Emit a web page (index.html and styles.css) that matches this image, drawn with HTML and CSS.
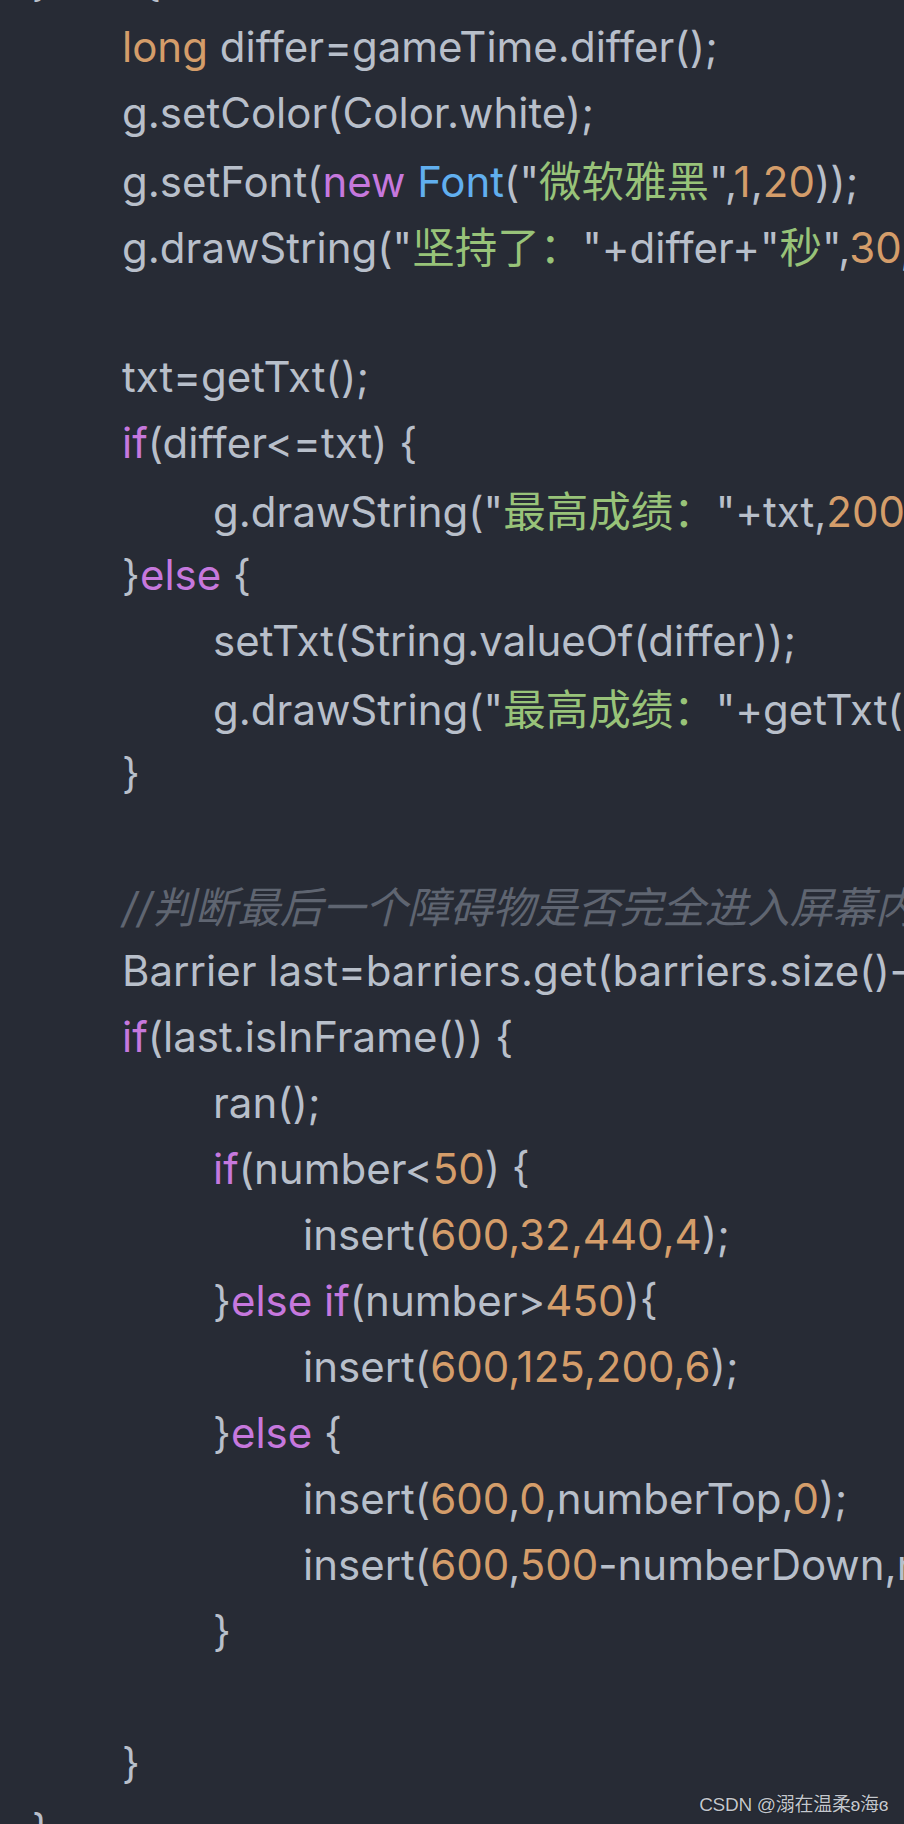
FILE: index.html
```html
<!DOCTYPE html>
<html lang="zh-CN">
<head>
<meta charset="utf-8">
<title>code</title>
<link rel="stylesheet" href="styles.css">
</head>
<body>
<div class="screen">
  <div class="code">
    <div class="ln l0">}<span class="kw">else</span> {</div>
    <div class="ln l1"><span class="num">long</span> differ=gameTime.differ();</div>
    <div class="ln l1">g.setColor(Color.white);</div>
    <div class="ln l1">g.setFont(<span class="kw">new</span> <span class="ty">Font</span>("<span class="str cjk">微软雅黑</span>",<span class="num">1</span>,<span class="num">20</span>));</div>
    <div class="ln l1">g.drawString("<span class="str cjk">坚持了：</span>"+differ+"<span class="str cjk">秒</span>",<span class="num">30</span>,<span class="num">50</span>);</div>
    <div class="ln l1"></div>
    <div class="ln l1">txt=getTxt();</div>
    <div class="ln l1"><span class="kw">if</span>(differ&lt;=txt) {</div>
    <div class="ln l2">g.drawString("<span class="str cjk">最高成绩：</span>"+txt,<span class="num">200</span>,<span class="num">50</span>);</div>
    <div class="ln l1">}<span class="kw">else</span> {</div>
    <div class="ln l2">setTxt(String.valueOf(differ));</div>
    <div class="ln l2">g.drawString("<span class="str cjk">最高成绩：</span>"+getTxt(),<span class="num">200</span>,<span class="num">50</span>);</div>
    <div class="ln l1">}</div>
    <div class="ln l1"></div>
    <div class="ln l1"><span class="cm">//<span class="cjk">判断最后一个障碍物是否完全进入屏幕内</span></span></div>
    <div class="ln l1">Barrier last=barriers.get(barriers.size()-<span class="num">1</span>);</div>
    <div class="ln l1"><span class="kw">if</span>(last.isInFrame()) {</div>
    <div class="ln l2">ran();</div>
    <div class="ln l2"><span class="kw">if</span>(number&lt;<span class="num">50</span>) {</div>
    <div class="ln l3">insert(<span class="num">600,32,440,4</span>);</div>
    <div class="ln l2">}<span class="kw">else if</span>(number&gt;<span class="num">450</span>){</div>
    <div class="ln l3">insert(<span class="num">600,125,200,6</span>);</div>
    <div class="ln l2">}<span class="kw">else</span> {</div>
    <div class="ln l3">insert(<span class="num">600</span>,<span class="num">0</span>,numberTop,<span class="num">0</span>);</div>
    <div class="ln l3">insert(<span class="num">600</span>,<span class="num">500</span>-numberDown,numberDown,<span class="num">2</span>);</div>
    <div class="ln l2">}</div>
    <div class="ln l1"></div>
    <div class="ln l1">}</div>
    <div class="ln l0">}</div>
  </div>
  <div class="watermark">CSDN @溺在温柔ʚ海ɞ</div>
</div>
</body>
</html>
```

FILE: styles.css
```css
html, body {
  margin: 0;
  padding: 0;
  background: #272b35;
}
.screen {
  position: relative;
  width: 904px;
  height: 1824px;
  overflow: hidden;
  background: #272b35;
}
.code {
  margin-top: -52px;
  display: flex;
  flex-direction: column;
  font-family: Inter, "Noto Sans CJK SC", sans-serif;
  font-size: 42px;
  color: #b8bfca;
}
.ln {
  height: 66px;
  line-height: 66px;
  white-space: nowrap;
}
.l0 { padding-left: 32px; }
.l1 { padding-left: 122px; }
.l2 { padding-left: 213px; }
.l3 { padding-left: 303px; }
.kw { color: #c678dd; }
.ty { color: #61afef; }
.num { color: #d49d6a; }
.str { color: #98c379; }
.cm { color: #5f6571; font-style: italic; }
.cjk {
  font-family: "Noto Sans CJK SC", sans-serif;
  font-size: 42.5px;
  line-height: 66px;
}
.watermark {
  position: absolute;
  right: 16px;
  bottom: 8px;
  font-family: "Liberation Sans", "Noto Sans CJK SC", sans-serif;
  font-size: 19px;
  letter-spacing: -0.3px;
  color: #c3c7ce;
  text-shadow: 0 0 1px #000;
}
```
